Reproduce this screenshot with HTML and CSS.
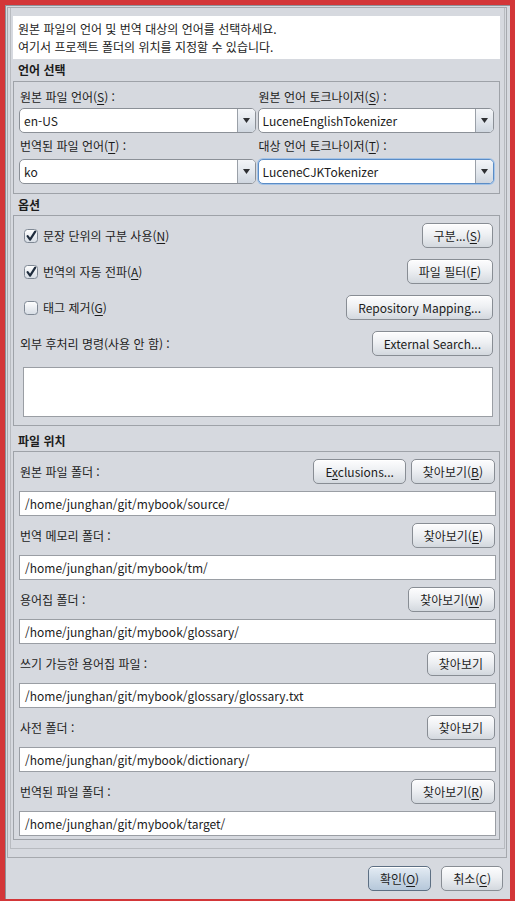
FILE: index.html
```html
<!DOCTYPE html>
<html lang="ko">
<head>
<meta charset="utf-8">
<title>프로젝트 속성</title>
<link rel="stylesheet" href="styles.css">
</head>
<body>
<div class="window">
  <div class="dialog">
    <div class="scroll">
      <div class="inner">
        <div class="desc">원본 파일의 언어 및 번역 대상의 언어를 선택하세요.<br>여기서 프로젝트 폴더의 위치를 지정할 수 있습니다.</div>

        <div class="title t1">언어 선택</div>
        <div class="group lang">
          <div class="lbl">원본 파일 언어(<u>S</u>) :</div>
          <div class="lbl">원본 언어 토크나이저(<u>S</u>) :</div>
          <div class="combo"><span class="val">en-US</span><span class="arrow"><svg width="7" height="5" viewBox="0 0 7 5"><polygon points="0,0 7,0 3.5,5" fill="#2e3033"/></svg></span></div>
          <div class="combo"><span class="val">LuceneEnglishTokenizer</span><span class="arrow"><svg width="7" height="5" viewBox="0 0 7 5"><polygon points="0,0 7,0 3.5,5" fill="#2e3033"/></svg></span></div>
          <div class="lbl second">번역된 파일 언어(<u>T</u>) :</div>
          <div class="lbl second">대상 언어 토크나이저(<u>T</u>) :</div>
          <div class="combo"><span class="val">ko</span><span class="arrow"><svg width="7" height="5" viewBox="0 0 7 5"><polygon points="0,0 7,0 3.5,5" fill="#2e3033"/></svg></span></div>
          <div class="combo focused"><span class="val">LuceneCJKTokenizer</span><span class="arrow"><svg width="7" height="5" viewBox="0 0 7 5"><polygon points="0,0 7,0 3.5,5" fill="#2e3033"/></svg></span></div>
        </div>

        <div class="title">옵션</div>
        <div class="group opts">
          <div class="row">
            <label class="chk"><span class="box"><svg width="14" height="14" viewBox="0 0 14 14"><defs><linearGradient id="cg" x1="0" y1="0" x2="0" y2="1"><stop offset="0" stop-color="#ffffff"/><stop offset="1" stop-color="#d6dce4"/></linearGradient></defs><rect x="0.5" y="0.5" width="13" height="13" rx="3" fill="url(#cg)" stroke="#7f8894"/><path d="M3.6 7.2 L6.1 10.6 L11.2 2.6" fill="none" stroke="#1f2c3d" stroke-width="2.2" stroke-linecap="round" stroke-linejoin="round"/></svg></span><span>문장 단위의 구분 사용(<u>N</u>)</span></label>
            <button class="btn">구분...(<u>S</u>)</button>
          </div>
          <div class="row">
            <label class="chk"><span class="box"><svg width="14" height="14" viewBox="0 0 14 14"><rect x="0.5" y="0.5" width="13" height="13" rx="3" fill="url(#cg)" stroke="#7f8894"/><path d="M3.6 7.2 L6.1 10.6 L11.2 2.6" fill="none" stroke="#1f2c3d" stroke-width="2.2" stroke-linecap="round" stroke-linejoin="round"/></svg></span><span>번역의 자동 전파(<u>A</u>)</span></label>
            <button class="btn">파일 필터(<u>F</u>)</button>
          </div>
          <div class="row">
            <label class="chk"><span class="box"><svg width="14" height="14" viewBox="0 0 14 14"><rect x="0.5" y="0.5" width="13" height="13" rx="3" fill="url(#cg)" stroke="#7f8894"/></svg></span><span>태그 제거(<u>G</u>)</span></label>
            <button class="btn">Repository Mapping...</button>
          </div>
          <div class="row">
            <span class="plain">외부 후처리 명령(사용 안 함) :</span>
            <button class="btn">External Search...</button>
          </div>
          <div class="area"></div>
        </div>

        <div class="title t3">파일 위치</div>
        <div class="group files">
          <div class="frow">
            <span class="plain">원본 파일 폴더 :</span>
            <span class="btns"><button class="btn">E<u>x</u>clusions...</button><button class="btn">찾아보기(<u>B</u>)</button></span>
          </div>
          <div class="field">/home/junghan/git/mybook/source/</div>
          <div class="frow">
            <span class="plain">번역 메모리 폴더 :</span>
            <span class="btns"><button class="btn">찾아보기(<u>E</u>)</button></span>
          </div>
          <div class="field">/home/junghan/git/mybook/tm/</div>
          <div class="frow">
            <span class="plain">용어집 폴더 :</span>
            <span class="btns"><button class="btn">찾아보기(<u>W</u>)</button></span>
          </div>
          <div class="field">/home/junghan/git/mybook/glossary/</div>
          <div class="frow">
            <span class="plain">쓰기 가능한 용어집 파일 :</span>
            <span class="btns"><button class="btn">찾아보기</button></span>
          </div>
          <div class="field">/home/junghan/git/mybook/glossary/glossary.txt</div>
          <div class="frow">
            <span class="plain">사전 폴더 :</span>
            <span class="btns"><button class="btn">찾아보기</button></span>
          </div>
          <div class="field">/home/junghan/git/mybook/dictionary/</div>
          <div class="frow">
            <span class="plain">번역된 파일 폴더 :</span>
            <span class="btns"><button class="btn">찾아보기(<u>R</u>)</button></span>
          </div>
          <div class="field">/home/junghan/git/mybook/target/</div>
        </div>
      </div>
    </div>
    <div class="footer">
      <button class="btn default">확인(<u>O</u>)</button>
      <button class="btn">취소(<u>C</u>)</button>
    </div>
  </div>
</div>
</body>
</html>
```

FILE: styles.css
```css
* { box-sizing: border-box; }

html, body {
  margin: 0;
  padding: 0;
}

body {
  background: #d33638;
  font-family: "Noto Sans CJK KR", "Noto Sans", sans-serif;
  font-size: 12px;
  color: #1c1c1c;
}

u { text-decoration: underline; text-underline-offset: 2px; }

.window {
  height: 901px;
  padding: 5px 5px 2px 5px;
}

.dialog {
  height: 100%;
  background: #d6d9df;
  border-top: 1px solid #8e9197;
  border-left: 1px solid #8e9197;
  display: flex;
  flex-direction: column;
}

.scroll {
  flex: none;
  height: 851px;
  margin: 1px 3px 0 1px;
  border: 1px solid #a6a9ae;
}

.inner {
  margin: 0 1px 0 2px;
  padding: 8px 4px 8px 2px;
  border-left: 1px solid #b8bbc0;
  border-right: 1px solid #b8bbc0;
  border-bottom: 1px solid #b8bbc0;
}

.desc {
  background: #ffffff;
  height: 43px;
  padding: 4px 5px 0 5px;
  line-height: 18px;
}

.title {
  font-weight: bold;
  height: 21px;
  line-height: 21px;
  padding-left: 5px;
}
.title.t1 { height: 22px; line-height: 22px; }
.title.t3 { height: 25px; padding-top: 4px; }

.group {
  border: 1px solid #9ea2a8;
}

/* language group */
.lang {
  display: grid;
  grid-template-columns: 1fr 1fr;
  column-gap: 2px;
  padding: 4px 5px 9px 5px;
}
.lbl {
  height: 22px;
  line-height: 22px;
  padding-left: 1px;
  white-space: nowrap;
}
.lbl.second { height: 26px; line-height: 26px; }

.combo {
  height: 25px;
  display: flex;
  border: 1px solid #8b9097;
  border-radius: 5px;
  background: #ffffff;
  overflow: hidden;
}
.combo .val {
  flex: 1;
  line-height: 23px;
  padding-left: 4px;
  white-space: nowrap;
}
.combo .arrow {
  width: 18px;
  display: flex;
  align-items: center;
  justify-content: center;
  border-left: 1px solid #9aa0a8;
  background: linear-gradient(#f3f5f8, #e1e6ec 55%, #cfd6df);
}
.combo.focused {
  border-color: #5a8cc6;
  box-shadow: 0 0 0 1px #a4c3e6;
}

/* options group */
.opts {
  display: flex;
  flex-direction: column;
  gap: 11px;
  padding: 7px 6px 8px 6px;
}
.row {
  height: 25px;
  display: flex;
  justify-content: space-between;
  align-items: center;
}
.chk {
  display: flex;
  align-items: center;
  gap: 5px;
  margin-left: 4px;
  white-space: nowrap;
}
.box { display: flex; width: 14px; height: 14px; }
.plain { white-space: nowrap; }

.area {
  height: 50px;
  margin-left: 3px;
  background: #ffffff;
  border: 1px solid #9a9ea4;
}

/* file group */
.files {
  display: flex;
  flex-direction: column;
  gap: 7px;
  padding: 7px 3px 3px 5px;
}
.frow {
  height: 25px;
  display: flex;
  justify-content: space-between;
  align-items: center;
  padding-left: 1px;
  padding-right: 1px;
}
.btns { display: flex; gap: 5px; }

.field {
  height: 25px;
  line-height: 23px;
  padding-left: 5px;
  background: #ffffff;
  border: 1px solid #9a9ea4;
  white-space: nowrap;
}

/* buttons */
.btn {
  height: 25px;
  padding: 0 11px;
  font: inherit;
  color: #1c1c1c;
  white-space: nowrap;
  border: 1px solid #888d94;
  border-radius: 5px;
  background: linear-gradient(#fdfdfe, #eef0f3 45%, #dde1e6 80%, #d3d8de);
  box-shadow: inset 0 1px 0 #ffffff;
}
.btn.default {
  border-color: #5d6f83;
  background: linear-gradient(#e4ecf4, #ccd9e6 50%, #b6c8da);
}

.footer {
  display: flex;
  justify-content: flex-end;
  gap: 10px;
  padding: 8px 7px 0 0;
}
```
